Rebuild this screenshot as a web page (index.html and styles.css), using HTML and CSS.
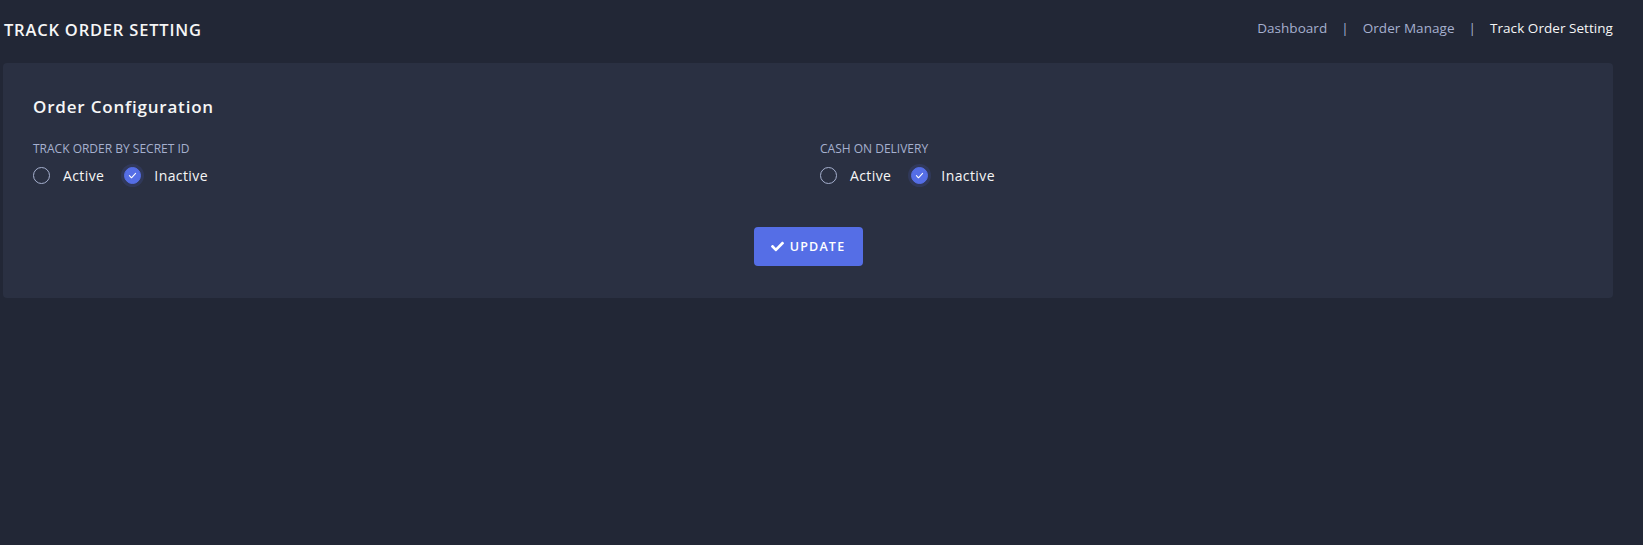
FILE: index.html
```html
<!DOCTYPE html>
<html lang="en">
<head>
<meta charset="utf-8">
<title>Track Order Setting</title>
<link rel="stylesheet" href="styles.css">
</head>
<body>
<div class="page">
  <div class="page-title-box">
    <h4 class="page-title">TRACK ORDER SETTING</h4>
    <ol class="breadcrumb">
      <li class="crumb"><a href="#">Dashboard</a></li>
      <li class="sep">|</li>
      <li class="crumb"><a href="#">Order Manage</a></li>
      <li class="sep">|</li>
      <li class="crumb active">Track Order Setting</li>
    </ol>
  </div>
  <div class="card">
    <h4 class="card-title">Order Configuration</h4>
    <div class="grid">
      <div class="field">
        <div class="label">TRACK ORDER BY SECRET ID</div>
        <div class="options">
          <label class="option"><span class="radio"></span><span>Active</span></label>
          <label class="option"><span class="radio checked"><svg viewBox="0 0 16 16" width="11" height="11"><path d="M3.5 8.3l3 3 6-6.3" fill="none" stroke="#fff" stroke-width="1.6" stroke-linecap="round" stroke-linejoin="round"/></svg></span><span>Inactive</span></label>
        </div>
      </div>
      <div class="field">
        <div class="label">CASH ON DELIVERY</div>
        <div class="options">
          <label class="option"><span class="radio"></span><span>Active</span></label>
          <label class="option"><span class="radio checked"><svg viewBox="0 0 16 16" width="11" height="11"><path d="M3.5 8.3l3 3 6-6.3" fill="none" stroke="#fff" stroke-width="1.6" stroke-linecap="round" stroke-linejoin="round"/></svg></span><span>Inactive</span></label>
        </div>
      </div>
    </div>
    <div class="actions">
      <button class="btn"><svg viewBox="0 0 512 512" width="13" height="13"><path fill="#fff" d="M173.9 439.4L7.5 273c-10-10-10-26.2 0-36.2l36.2-36.2c10-10 26.2-10 36.2 0L192 312.7 432.1 72.6c10-10 26.2-10 36.2 0l36.2 36.2c10 10 10 26.2 0 36.2L210.1 439.4c-10 10-26.2 10-36.2 0z"/></svg><span>UPDATE</span></button>
    </div>
  </div>
</div>
</body>
</html>
```

FILE: styles.css
```css
html, body {
  margin: 0;
  padding: 0;
  background: #222736;
  font-family: "Open Sans", "Noto Sans", sans-serif;
  color: #f6f6f6;
}
.page {
  width: 1610px;
  margin-left: 3px;
}
.page-title-box {
  height: 59px;
  display: flex;
  align-items: center;
  justify-content: space-between;
}
.page-title {
  margin: 0 0 0 1px;
  font-size: 16.5px;
  font-weight: 600;
  color: #f6f6f6;
  letter-spacing: 0.8px;
}
.breadcrumb {
  list-style: none;
  margin: 0 0 3px 0;
  padding: 0;
  display: flex;
  align-items: center;
  font-size: 13.5px;
  letter-spacing: 0.05px;
  gap: 12px;
}
.crumb a {
  color: #a6b0cf;
  text-decoration: none;
}
.crumb.active {
  color: #f6f6f6;
}
.sep {
  color: #a6b0cf;
  padding: 0 2px;
}
.card {
  margin-top: 4px;
  background: #2a3042;
  border-radius: 4px;
  padding: 32px 30px 32px 30px;
}
.card-title {
  margin: 0;
  font-size: 17px;
  line-height: 24px;
  font-weight: 600;
  letter-spacing: 0.8px;
  color: #f6f6f6;
}
.grid {
  margin-top: 20px;
  display: grid;
  grid-template-columns: 1fr 1fr;
  column-gap: 24px;
}
.label {
  font-size: 12px;
  line-height: 19px;
  color: #a6b0cf;
}
.options {
  margin-top: 7px;
  display: flex;
  align-items: center;
  gap: 20px;
  height: 20px;
}
.option {
  display: flex;
  align-items: center;
  gap: 13px;
  font-size: 14px;
  letter-spacing: 0.4px;
  color: #f6f6f6;
}
.radio {
  width: 15px;
  height: 15px;
  border: 1.5px solid #a6b0cf;
  border-radius: 50%;
  display: flex;
  align-items: center;
  justify-content: center;
  box-sizing: content-box;
}
.radio.checked {
  background: #556ee6;
  border-color: #556ee6;
  box-shadow: 0 0 0 3px rgba(85, 110, 230, 0.15);
}
.actions {
  margin-top: 42px;
  display: flex;
  justify-content: center;
}
.btn {
  width: 109px;
  height: 39px;
  background: #556ee6;
  border: none;
  border-radius: 4px;
  color: #fff;
  font-family: "Open Sans", "Noto Sans", sans-serif;
  font-size: 12.5px;
  font-weight: 600;
  letter-spacing: 1.2px;
  display: flex;
  align-items: center;
  justify-content: center;
  gap: 6px;
  padding: 0;
}
```
